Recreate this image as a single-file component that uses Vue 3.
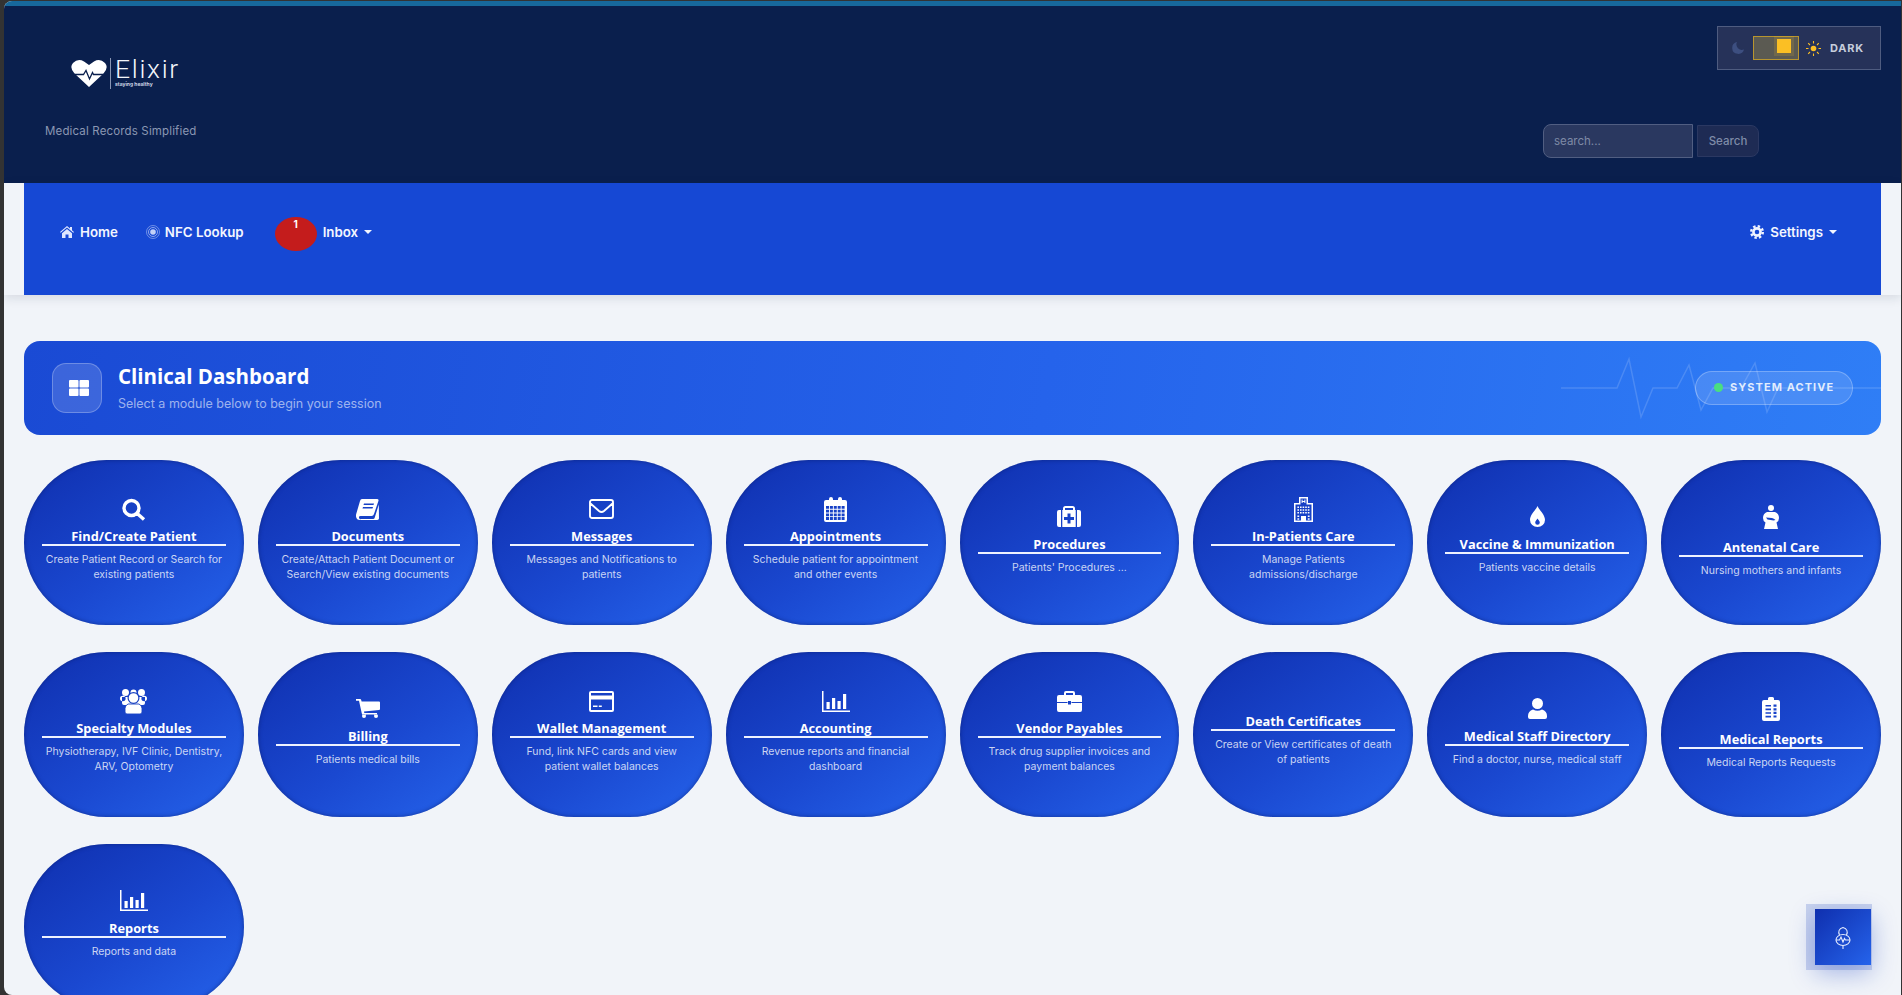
<script setup>
const c = (x, y, r) => `M${x - r} ${y}a${r} ${r} 0 1 0 ${2 * r} 0a${r} ${r} 0 1 0 ${-2 * r} 0z`
const grid = (x0, y0, nx, ny, w, h, dx, dy) => {
  let s = ''
  for (let j = 0; j < ny; j++) for (let i = 0; i < nx; i++) s += `M${x0 + i * dx} ${y0 + j * dy}h${w}v${h}h${-w}z`
  return s
}
const BAR = 'M0 0h1.5v19.5H28V21H0zM4.5 11h3.2v7H4.5zM10 7h3.2v11H10zM15.5 10h3.2v8h-3.2zM21 3h3.2v15H21z'
const icons = {
  search: { w: 24, h: 23, p: [{ d: 'M17 10a7.5 7.5 0 1 1-15 0 7.5 7.5 0 1 1 15 0zM15.2 15.5L22 21.5', f: 'none', c: '#fff', w: 3.4 }] },
  book: { w: 23, h: 21, p: [{ d: 'M6 0h15q2 0 1.4 2L18 15q-.6 2-2.4 2H4.5q-2 0-1.4 2t2 1h12q1.2 0 1.5-1L22.8 5.5l.2 14q-.4 1.5-2 1.5H4q-3.5 0-4-3.5Q-.2 16 .5 14L4 2q.5-2 2-2zM8 4.5h10l-.5 1.5H7.5zM7 8h10l-.5 1.5H6.5z' }] },
  env: { w: 25, h: 20, p: [{ d: 'M3 1h19a2 2 0 0 1 2 2v14a2 2 0 0 1-2 2H3a2 2 0 0 1-2-2V3a2 2 0 0 1 2-2zM1.5 4.5L10 12q2.5 2 5 0l8.5-7.5', f: 'none', c: '#fff', w: 1.9 }] },
  cal: { w: 23, h: 25, p: [{ d: 'M2 3h3V2a2 2 0 0 1 4 0v1h5V2a2 2 0 0 1 4 0v1h3a2 2 0 0 1 2 2v18a2 2 0 0 1-2 2H2a2 2 0 0 1-2-2V5a2 2 0 0 1 2-2z' + grid(2, 9, 5, 4, 3, 2.8, 3.9, 3.7) }] },
  med: { w: 24, h: 21, p: [{ d: 'M2 4h4V2.5Q6 0 8.5 0h7Q18 0 18 2.5V4h4a2 2 0 0 1 2 2v13a2 2 0 0 1-2 2H2a2 2 0 0 1-2-2V6a2 2 0 0 1 2-2zM8 2h8v2H8zM4 4h1.3v17H4zM18.7 4H20v17h-1.3zM10.5 7.5h3v3.5h3.5v3h-3.5v3.5h-3v-3.5H7v-3h3.5z' }] },
  hosp: { w: 19, h: 25, p: [{ d: 'M5 0h9v6h5v19H0V6h5zM1.5 7.5h5v-6h6v6h5v16h-16zM7.6 2.5h1V4h1.8V2.5h1V6h-1V5H8.6v1h-1zM7 19h5v4.5H7z' + grid(3.4, 9.5, 5, 3, 1.6, 1.6, 2.6, 2.7) + grid(3.4, 18.5, 1, 2, 1.8, 1.6, 2, 2.7) + grid(13.8, 18.5, 1, 2, 1.8, 1.6, 2, 2.7) }] },
  tint: { w: 15, h: 21, p: [{ d: 'M7.5 0C9 4 15 8.5 15 14a7.5 7 0 0 1-15 0C0 8.5 6 4 7.5 0zM7.5 12.5c.8 1.5 2.3 2.5 2.3 4a2.3 2.3 0 0 1-4.6 0c0-1.5 1.5-2.5 2.3-4z' }] },
  ante: { w: 16, h: 24, p: [{ d: c(8, 3, 3) + 'M4 7h8q4 1.5 4 6 0 3-2.5 4.5L15 24H1l1.5-6.5Q0 16 0 13q0-4.5 4-6zM3 12.5l6 .5q2 .5 3.5 2l-2 .5-6-1z' }] },
  group: { w: 27, h: 25, p: [
    { d: c(5.5, 3.5, 3.5) + c(21.5, 3.5, 3.5) + c(2.8, 9.5, 2.8) + c(24.2, 9.5, 2.8) + c(13.5, 3.5, 3) + 'M2 8h23v6q0 2-2 2H4q-2 0-2-2z' },
    { d: c(13.5, 9, 5.4), f: '#fff', c: '#1a42c2', w: 1.2 },
    { d: 'M8 15h11q3 1.5 3 4.5V23q0 2-2 2H7q-2 0-2-2v-3.5Q5 16.5 8 15z', c: '#1a42c2', w: 0.9 },
  ] },
  cart: { w: 24, h: 19, p: [{ d: 'M0 0h4q1 0 1.2 1L5.6 2.5H23q1 0 1 1V10q0 1-1 1L8 12.5l.3 1.5H21v1.5H7q-1 0-1.2-1L3 1.8H0z' + c(8, 17, 2) + c(20, 17, 2) }] },
  card: { w: 25, h: 21, p: [{ d: 'M2 0h21a2 2 0 0 1 2 2v17a2 2 0 0 1-2 2H2a2 2 0 0 1-2-2V2a2 2 0 0 1 2-2zM2 2v2.5h21V2zM2 8.5V19h21V8.5zM4 14.5h4.5V16H4zM9.8 14.5h3V16h-3z' }] },
  bar: { w: 28, h: 21, p: [{ d: BAR }] },
  brief: { w: 25, h: 21, p: [{ d: 'M2 4h5V2q0-2 2-2h7q2 0 2 2v2h5a2 2 0 0 1 2 2v13a2 2 0 0 1-2 2H2a2 2 0 0 1-2-2V6a2 2 0 0 1 2-2zM9 2h7v2H9zM0 11h10.5v1H0zM14.5 11H25v1H14.5zM11 10h3v3.5h-3z' }] },
  user: { w: 21, h: 21, p: [{ d: c(10.5, 5.5, 5.5) + 'M6 11.5q4.5 2.5 9 0 5 1.5 5 6.5v1q0 2-2 2H3q-2 0-2-2v-1q0-5 5-6.5z' }] },
  clip: { w: 18, h: 24, p: [{ d: 'M2 3h4V1.5Q6 0 7.5 0h3Q12 0 12 1.5V3h4a2 2 0 0 1 2 2v17a2 2 0 0 1-2 2H2a2 2 0 0 1-2-2V5a2 2 0 0 1 2-2z' + grid(3.5, 8, 1, 4, 5.5, 1.6, 0, 3.6) + grid(11.5, 7.6, 1, 4, 3, 2.2, 0, 3.6) }] },
}

const modules = [
  ['Find/Create Patient', 'Create Patient Record or Search for existing patients', 'search'],
  ['Documents', 'Create/Attach Patient Document or Search/View existing documents', 'book'],
  ['Messages', 'Messages and Notifications to patients', 'env'],
  ['Appointments', 'Schedule patient for appointment and other events', 'cal'],
  ['Procedures', "Patients' Procedures ...", 'med'],
  ['In-Patients Care', 'Manage Patients admissions/discharge', 'hosp'],
  ['Vaccine & Immunization', 'Patients vaccine details', 'tint'],
  ['Antenatal Care', 'Nursing mothers and infants', 'ante', 'tall'],
  ['Specialty Modules', 'Physiotherapy, IVF Clinic, Dentistry, ARV, Optometry', 'group'],
  ['Billing', 'Patients medical bills', 'cart'],
  ['Wallet Management', 'Fund, link NFC cards and view patient wallet balances', 'card'],
  ['Accounting', 'Revenue reports and financial dashboard', 'bar'],
  ['Vendor Payables', 'Track drug supplier invoices and payment balances', 'brief'],
  ['Death Certificates', 'Create or View certificates of death of patients', null, 'none'],
  ['Medical Staff Directory', 'Find a doctor, nurse, medical staff', 'user'],
  ['Medical Reports', 'Medical Reports Requests', 'clip', 'tall'],
  ['Reports', 'Reports and data', 'bar'],
].map(([title, desc, icon, size]) => ({ title, desc, icon: icon && icons[icon], size: size || '' }))
</script>

<template>
  <div class="frame">
    <div class="window">
      <div class="topline"></div>
      <header class="header">
        <div class="brand">
          <div class="logo">
            <svg class="heart" width="36" height="27" viewBox="0 0 36 27">
              <path d="M18 27L3.5 13.5Q-2 7.5 2 3 7-2 13 1.5L18 5l5-3.5Q29-2 34 3q4 4.5-1.5 10.5z" fill="#fff" />
              <path d="M3 14.5h9.5l2.5-4 3.5 8.5 3-6.5 1 2H33" fill="none" stroke="#0a1f4d" stroke-width="1.3" />
            </svg>
            <span class="divider"></span>
            <div class="wordmark">
              <span class="elixir">Elixir</span>
              <span class="staying">staying healthy</span>
            </div>
          </div>
          <p class="tagline">Medical Records Simplified</p>
        </div>
        <div class="tools">
          <div class="theme">
            <svg width="12" height="12" viewBox="0 0 12 12"><path d="M5 0a6 6 0 1 0 7 7.5A5.5 5.5 0 0 1 5 0z" fill="#3d4f80" /></svg>
            <div class="track"><span class="knob"></span></div>
            <svg class="sun" width="15" height="15" viewBox="0 0 15 15">
              <circle cx="7.5" cy="7.5" r="2.8" fill="#fbbf24" />
              <path d="M7.5 0v2.5M7.5 12.5V15M0 7.5h2.5M12.5 7.5H15M2.2 2.2L4 4M11 11l1.8 1.8M2.2 12.8L4 11M11 4l1.8-1.8" stroke="#fbbf24" stroke-width="1.1" />
            </svg>
            <span class="dark">DARK</span>
          </div>
          <form class="search" @submit.prevent>
            <input class="search-input" placeholder="search..." />
            <button class="search-btn">Search</button>
          </form>
        </div>
      </header>

      <div class="navwrap">
        <nav class="nav">
          <a class="link home">
            <svg width="14" height="12" viewBox="0 0 14 12"><path d="M7 0l3 2.6V1h2v3.3L14 6l-.7.8L7 1.6.7 6.8 0 6zM7 3l5 4.2V12H8.5V8.5h-3V12H2V7.2z" fill="#dfe7ff" /></svg>
            Home
          </a>
          <a class="link nfc">
            <svg width="14" height="14" viewBox="0 0 14 14">
              <circle cx="7" cy="7" r="6.5" fill="none" stroke="#a9bcf2" stroke-opacity=".6" />
              <circle cx="7" cy="7" r="4.5" fill="none" stroke="#a9bcf2" stroke-opacity=".8" />
              <circle cx="7" cy="7" r="2.8" fill="#c3d1f7" />
            </svg>
            NFC Lookup
          </a>
          <span class="badge">1</span>
          <a class="link inbox">Inbox<i class="caret"></i></a>
          <a class="link settings">
            <svg width="14" height="14" viewBox="0 0 14 14">
              <circle cx="7" cy="7" r="3.6" fill="none" stroke="#f0f4ff" stroke-width="2.6" />
              <circle cx="7" cy="7" r="5.8" fill="none" stroke="#f0f4ff" stroke-width="2.4" stroke-dasharray="2.4 2.15" />
            </svg>
            Settings<i class="caret"></i>
          </a>
        </nav>
      </div>

      <main class="main">
        <section class="banner">
          <svg class="pulse" width="320" height="94" viewBox="0 0 320 94">
            <polyline points="0,47 56,47 68,18 80,76 92,47 116,47 128,24 140,69 152,47 180,47 194,22 206,71 217,47 320,47" fill="none" stroke="#fff" stroke-opacity=".15" stroke-width="1.5" />
          </svg>
          <div class="banner-icon">
            <svg width="20" height="16" viewBox="0 0 20 16">
              <path d="M1 0h7.5a1 1 0 0 1 1 1v5.5a1 1 0 0 1-1 1H1a1 1 0 0 1-1-1V1a1 1 0 0 1 1-1zM11.500 0H19a1 1 0 0 1 1 1v5.500a1 1 0 0 1-1 1h-7.500a1 1 0 0 1-1-1V1a1 1 0 0 1 1-1zM1 8.500h7.500a1 1 0 0 1 1 1V15a1 1 0 0 1-1 1H1a1 1 0 0 1-1-1V9.500a1 1 0 0 1 1-1zM11.500 8.500H19a1 1 0 0 1 1 1V15a1 1 0 0 1-1 1h-7.500a1 1 0 0 1-1-1V9.500a1 1 0 0 1 1-1z" fill="#fff" />
            </svg>
          </div>
          <div class="banner-text">
            <h1>Clinical Dashboard</h1>
            <p>Select a module below to begin your session</p>
          </div>
          <div class="status"><span class="dot"></span>SYSTEM ACTIVE</div>
        </section>

        <section class="grid">
          <article v-for="m in modules" :key="m.title" class="card">
            <div class="icon" :class="m.size">
              <svg v-if="m.icon" :width="m.icon.w" :height="m.icon.h" :viewBox="`0 0 ${m.icon.w} ${m.icon.h}`">
                <path v-for="(p, i) in m.icon.p" :key="i" :d="p.d" :fill="p.f || '#fff'" :stroke="p.c || 'none'" :stroke-width="p.w || 0" fill-rule="evenodd" />
              </svg>
            </div>
            <h3>{{ m.title }}</h3>
            <p>{{ m.desc }}</p>
          </article>
        </section>
      </main>

      <button class="fab" aria-label="Assistant">
        <svg width="16" height="23" viewBox="0 0 16 23" fill="none" stroke="#e6ecff" stroke-width="1.1">
          <path d="M4.500 9Q2 3.500 8 1.500 14 3.500 11.500 9" />
          <ellipse cx="8" cy="14" rx="7" ry="5.500" />
          <path d="M1 14h3.500l1.500-3 2 5 1.500-3.500 1 1.500H15M8 19.500V23" />
        </svg>
      </button>
    </div>
  </div>
</template>

<style>
html, body { margin: 0; height: 100%; overflow: hidden; background: #333; }
</style>

<style scoped>
.frame { width: 1902px; height: 995px; background: #333; padding: 1px 1px 0 4px; box-sizing: border-box; overflow: hidden; }
.window { position: relative; height: 994px; background: #f1f4f9; border-radius: 8px 0 0 8px; overflow: hidden; font-family: Inter, "Liberation Sans", sans-serif; }
.topline { height: 5px; background: #17689c; }

.header { height: 177px; box-sizing: border-box; background: #0a1f4d; display: flex; justify-content: space-between; padding: 20px 20px 0 41px; }
.brand { display: flex; flex-direction: column; }
.logo { display: flex; align-items: flex-start; margin: 32px 0 0 26px; height: 31px; }
.heart { margin-top: 2px; }
.divider { width: 1px; height: 31px; background: #8995b3; margin: 0 4px 0 3px; }
.wordmark { display: flex; flex-direction: column; margin-top: -1px; }
.elixir { font: 300 26.5px/24px Roboto, sans-serif; letter-spacing: 1.7px; color: #f4f6fb; }
.staying { font: 700 5px/6px Inter, sans-serif; color: #cdd4e4; }
.tagline { margin: 34px 0 0; font-size: 11.5px; line-height: 16px; letter-spacing: .15px; color: #8b97b3; }

.tools { display: flex; flex-direction: column; align-items: flex-end; }
.theme { width: 164px; height: 44px; box-sizing: border-box; display: flex; align-items: center; padding-left: 14px; background: #263259; border: 1px solid #4f5c80; }
.track { position: relative; width: 46px; height: 24px; box-sizing: border-box; margin-left: 9px; background: #5b5a52; border: 1px solid #b8952f; }
.knob { position: absolute; top: 2px; right: 7px; width: 14px; height: 14px; background: #fbbf24; box-shadow: 0 0 0 3px rgba(251, 191, 36, .14); }
.sun { margin-left: 7px; }
.dark { margin-left: 9px; font-size: 11px; font-weight: 700; letter-spacing: .75px; color: #c7cddc; }
.search { display: flex; align-items: center; margin: 54px 122px 0 0; }
.search-input { width: 150px; height: 34px; box-sizing: border-box; padding: 0 10px; background: #2a3860; border: 1px solid #515e82; border-radius: 8px 0 0 8px; font: 11.5px Inter, sans-serif; color: #fff; outline: 0; }
.search-input::placeholder { color: #7f8aa6; opacity: 1; }
.search-btn { width: 62px; height: 32px; margin-left: 4px; background: #1e2b54; border: 1px solid #2b3862; border-radius: 0 8px 8px 0; font: 500 11.5px Inter, sans-serif; color: #7f8ba8; padding: 0; }

.navwrap { padding: 0 20px; box-shadow: 0 3px 10px rgba(20, 30, 60, .12); position: relative; }
.nav { height: 112px; box-sizing: border-box; padding: 34px 0 0 36px; background: #1648d4; display: flex; align-items: flex-start; }
.link { height: 30px; display: flex; align-items: center; gap: 6px; font-size: 13.3px; font-weight: 600; color: #f3f6ff; }
.nfc { margin-left: 28px; gap: 5px; }
.badge { width: 42px; height: 34px; margin-left: 31px; box-sizing: border-box; padding-top: 1px; text-align: center; border-radius: 50%; background: #c41c1c; color: #fff; font-size: 10px; font-weight: 700; line-height: 13px; }
.inbox { margin-left: 6px; }
.settings { margin-left: auto; margin-right: 44px; }
.caret { width: 0; height: 0; margin-left: 0; border: 4px solid transparent; border-top-color: #f3f6ff; border-bottom: 0; }

.main { padding: 46px 20px 0; }
.banner { position: relative; height: 94px; box-sizing: border-box; display: flex; align-items: center; padding: 0 28px; border-radius: 16px; background: linear-gradient(100deg, #1a4ad4 0%, #2563eb 55%, #2f7ef6 100%); overflow: hidden; }
.pulse { position: absolute; right: 0; top: 0; }
.banner-icon { width: 50px; height: 50px; box-sizing: border-box; display: flex; align-items: center; justify-content: center; padding-left: 4px; background: rgba(255, 255, 255, .15); border: 1px solid rgba(255, 255, 255, .25); border-radius: 14px; }
.banner-text { margin-left: 16px; }
.banner-text h1 { margin: -2px 0 0; font: 700 20.5px/28px "Open Sans", sans-serif; color: #fff; }
.banner-text p { margin: 5px 0 0; font-size: 12.5px; line-height: 18px; color: rgba(255, 255, 255, .58); }
.status { position: relative; margin: -1px 0 0 auto; width: 158px; height: 34px; box-sizing: border-box; display: flex; align-items: center; padding: 0 0 1px 18px; gap: 7px; background: rgba(255, 255, 255, .13); border: 1px solid rgba(255, 255, 255, .25); border-radius: 17px; font-size: 11px; font-weight: 700; letter-spacing: 1.05px; color: rgba(255, 255, 255, .85); }
.dot { width: 9px; height: 9px; border-radius: 50%; background: #4ade80; }

.grid { display: grid; grid-template-columns: repeat(8, 1fr); gap: 27px 14px; margin-top: 25px; }
.card { height: 165px; box-sizing: border-box; padding: 0 18px 8px; display: flex; flex-direction: column; justify-content: center; align-items: stretch; text-align: center; color: #fff; border-radius: 100px; background: linear-gradient(145deg, #0f2fae 0%, #1a48d0 55%, #2563eb 100%); box-shadow: inset 0 0 4px rgba(10, 30, 110, .65); }
.icon { height: 30px; box-sizing: border-box; padding-bottom: 2px; display: flex; align-items: center; justify-content: center; }
.icon.tall { height: 36px; }
.icon.none { height: 16px; }
.card h3 { margin: 0; padding-top: 3px; font: 700 12.8px/16px "Open Sans", sans-serif; white-space: nowrap; border-bottom: 2px solid #eef2ff; }
.card p { margin: 6px 0 0; font-size: 10.5px; line-height: 15px; color: rgba(255, 255, 255, .78); }

.fab { position: absolute; right: 30px; top: 908px; width: 56px; height: 56px; padding: 0; display: flex; align-items: center; justify-content: center; background: linear-gradient(135deg, #0f2fae, #2563eb); border: 0; box-shadow: -4px 0 0 5px rgba(30, 70, 190, .2), 0 8px 24px rgba(20, 60, 190, .35); }
</style>
